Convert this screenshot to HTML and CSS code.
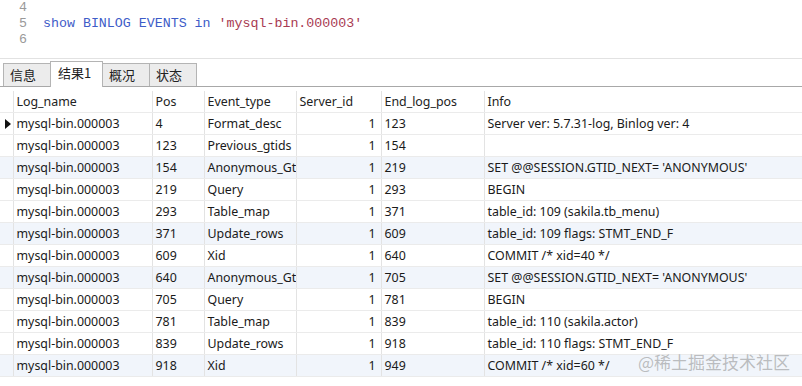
FILE: index.html
```html
<!DOCTYPE html>
<html lang="en">
<head>
    <meta charset="UTF-8">
    <title>Binlog events</title>
    <link rel="stylesheet" href="styles.css">
</head>
<body>
    <div class="editor">
        <div class="line"><span class="ln">4</span><span class="code"></span></div>
        <div class="line"><span class="ln">5</span><span class="code"><span class="kw">show BINLOG EVENTS in</span> <span class="str">'mysql-bin.000003'</span></span></div>
        <div class="line"><span class="ln">6</span><span class="code"></span></div>
    </div>

    <div class="tabs">
        <div class="tab">信息</div>
        <div class="tab active">结果1</div>
        <div class="tab">概况</div>
        <div class="tab">状态</div>
    </div>

    <div class="grid-wrap">
        <table class="grid">
            <colgroup>
                <col class="c-ind">
                <col class="c-log">
                <col class="c-pos">
                <col class="c-type">
                <col class="c-sid">
                <col class="c-end">
                <col class="c-info">
            </colgroup>
            <thead>
                <tr>
                    <th></th><th>Log_name</th><th>Pos</th><th>Event_type</th><th>Server_id</th><th>End_log_pos</th><th>Info</th>
                </tr>
            </thead>
            <tbody>
                <tr><td class="ind"><span class="arrow"></span></td><td>mysql-bin.000003</td><td>4</td><td>Format_desc</td><td class="num">1</td><td>123</td><td>Server ver: 5.7.31-log, Binlog ver: 4</td></tr>
                <tr><td class="ind"></td><td>mysql-bin.000003</td><td>123</td><td>Previous_gtids</td><td class="num">1</td><td>154</td><td></td></tr>
                <tr class="alt"><td class="ind"></td><td>mysql-bin.000003</td><td>154</td><td>Anonymous_Gti</td><td class="num">1</td><td>219</td><td>SET @@SESSION.GTID_NEXT= 'ANONYMOUS'</td></tr>
                <tr><td class="ind"></td><td>mysql-bin.000003</td><td>219</td><td>Query</td><td class="num">1</td><td>293</td><td>BEGIN</td></tr>
                <tr><td class="ind"></td><td>mysql-bin.000003</td><td>293</td><td>Table_map</td><td class="num">1</td><td>371</td><td>table_id: 109 (sakila.tb_menu)</td></tr>
                <tr class="alt"><td class="ind"></td><td>mysql-bin.000003</td><td>371</td><td>Update_rows</td><td class="num">1</td><td>609</td><td>table_id: 109 flags: STMT_END_F</td></tr>
                <tr><td class="ind"></td><td>mysql-bin.000003</td><td>609</td><td>Xid</td><td class="num">1</td><td>640</td><td>COMMIT /* xid=40 */</td></tr>
                <tr class="alt"><td class="ind"></td><td>mysql-bin.000003</td><td>640</td><td>Anonymous_Gti</td><td class="num">1</td><td>705</td><td>SET @@SESSION.GTID_NEXT= 'ANONYMOUS'</td></tr>
                <tr><td class="ind"></td><td>mysql-bin.000003</td><td>705</td><td>Query</td><td class="num">1</td><td>781</td><td>BEGIN</td></tr>
                <tr><td class="ind"></td><td>mysql-bin.000003</td><td>781</td><td>Table_map</td><td class="num">1</td><td>839</td><td>table_id: 110 (sakila.actor)</td></tr>
                <tr><td class="ind"></td><td>mysql-bin.000003</td><td>839</td><td>Update_rows</td><td class="num">1</td><td>918</td><td>table_id: 110 flags: STMT_END_F</td></tr>
                <tr class="alt"><td class="ind"></td><td>mysql-bin.000003</td><td>918</td><td>Xid</td><td class="num">1</td><td>949</td><td>COMMIT /* xid=60 */</td></tr>
            </tbody>
        </table>
        <div class="watermark">@稀土掘金技术社区</div>
    </div>
</body>
</html>
```

FILE: styles.css
```css
body {
    margin: 0;
    width: 802px;
    height: 386px;
    overflow: hidden;
    background-color: #fff;
    font-family: 'Noto Sans', 'Noto Sans CJK SC', sans-serif;
    font-size: 12.4px;
    color: #1a1a1a;
}
.editor {
    height: 58px;
    border-bottom: 1px solid #e2e2e2;
    font-family: 'Liberation Mono', monospace;
    font-size: 13.3px;
}
.line {
    display: flex;
    height: 16px;
    line-height: 16px;
}
.ln {
    width: 27px;
    text-align: right;
    color: #999;
}
.code {
    padding-left: 16px;
    white-space: pre;
}
.kw {
    color: #3d5cc8;
}
.str {
    color: #a83a52;
}
.tabs {
    display: flex;
    align-items: flex-end;
    height: 27px;
    padding-left: 3px;
    border-bottom: 1px solid #a8a8a8;
}
.tab {
    height: 22px;
    line-height: 22px;
    padding: 0 6px;
    background-color: #ececec;
    border: 1px solid #b4b4b4;
    border-bottom: none;
    margin-right: -1px;
    width: 34px;
    font-family: 'Noto Sans CJK SC', sans-serif;
    font-size: 13px;
    color: #222;
}
.tab.active {
    height: 25px;
    line-height: 22px;
    background-color: #fff;
    margin-bottom: -1px;
    width: 38px;
    padding: 0 6px 0 7px;
}
.grid-wrap {
    position: relative;
    padding-top: 4px;
}
.grid {
    border-collapse: collapse;
    table-layout: fixed;
    width: 900px;
}
.c-ind { width: 13px; }
.c-log { width: 139px; }
.c-pos { width: 52px; }
.c-type { width: 92px; }
.c-sid { width: 85px; }
.c-end { width: 103px; }
.c-info { width: 416px; }
.grid th,
.grid td {
    height: 21px;
    padding: 0 3px;
    border-right: 1px solid #e3e3e3;
    border-bottom: 1px solid #ebebeb;
    white-space: nowrap;
    overflow: hidden;
    text-align: left;
    font-weight: normal;
}
.grid th {
    color: #222;
}
.grid td.num {
    text-align: right;
    padding-right: 5px;
}
.grid td.ind {
    padding: 0;
}
.grid tr.alt td {
    background-color: #f1f5fb;
}
.arrow {
    display: block;
    width: 0;
    height: 0;
    margin-left: 5px;
    border-top: 5px solid transparent;
    border-bottom: 5px solid transparent;
    border-left: 6px solid #111;
}
.watermark {
    position: absolute;
    left: 638px;
    top: 262px;
    font-family: 'Noto Sans CJK SC', sans-serif;
    font-size: 17px;
    color: rgba(150, 150, 150, 0.6);
}
```
